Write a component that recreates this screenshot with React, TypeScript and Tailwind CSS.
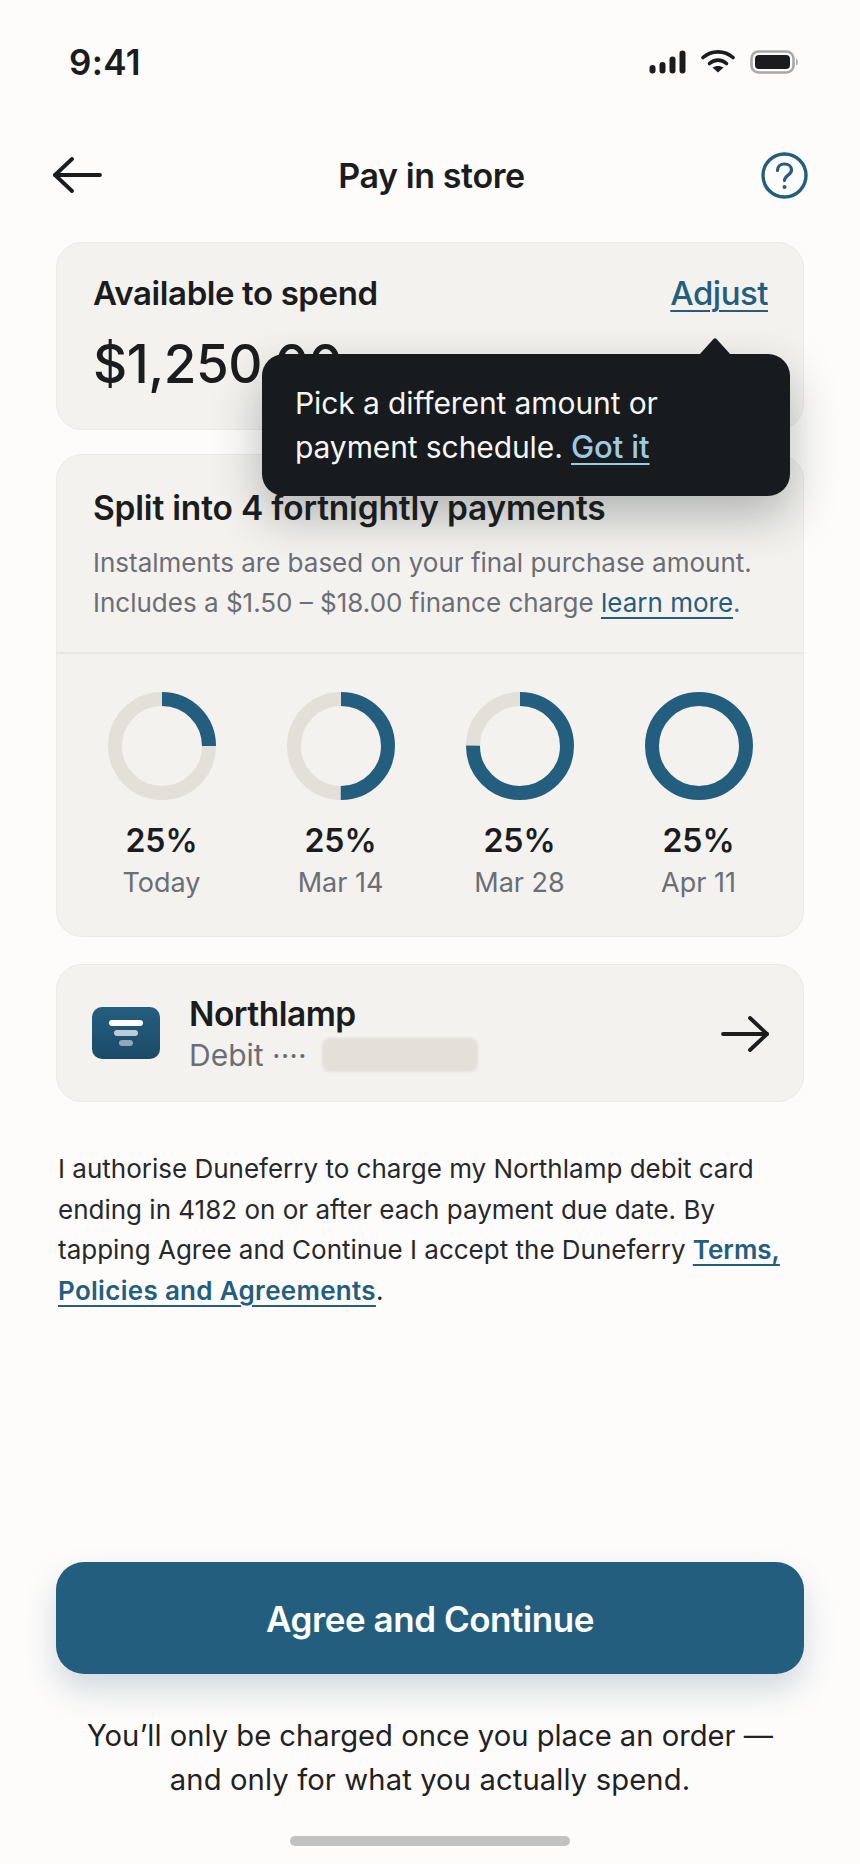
import React from "react";

function Donut({ pct }: { pct: number }) {
  const r = 47;
  const c = 2 * Math.PI * r;
  return (
    <svg width="108" height="108" viewBox="0 0 108 108">
      <circle cx="54" cy="54" r={r} fill="none" stroke="#e3e0d9" strokeWidth="14" />
      <circle
        cx="54"
        cy="54"
        r={r}
        fill="none"
        stroke="#245e7e"
        strokeWidth="14"
        strokeDasharray={`${c * pct} ${c}`}
        transform="rotate(-90 54 54)"
      />
    </svg>
  );
}

const steps = [
  { pct: 0.25, label: "Today" },
  { pct: 0.5, label: "Mar 14" },
  { pct: 0.75, label: "Mar 28" },
  { pct: 1, label: "Apr 11" },
];

export default function App() {
  return (
    <div className="w-[860px] h-[1864px] flex flex-col bg-[#fdfcfb] text-[#1a1c1e] font-['Inter',sans-serif] overflow-hidden">
      {/* status bar */}
      <div className="h-[124px] shrink-0 flex items-start justify-between pl-[69px] pr-[62px] pt-[42px]">
        <span className="text-[35px] leading-[40px] font-semibold tracking-[0.3px]">9:41</span>
        <div className="flex items-center gap-[15px] pt-[8px]">
          <svg width="37" height="24" viewBox="0 0 37 24" fill="#1a1c1e">
            <rect x="0.5" y="15" width="6" height="8.5" rx="3" />
            <rect x="10.5" y="12" width="6" height="11.5" rx="3" />
            <rect x="20.5" y="6.5" width="6" height="17" rx="3" />
            <rect x="30.5" y="0.5" width="6" height="23" rx="3" />
          </svg>
          <svg width="34" height="24" viewBox="0 0 34 24" fill="none" stroke="#1a1c1e" strokeWidth="3.6" strokeLinecap="round">
            <path d="M2 7.5C10.5 0 23.5 0 32 7.5" />
            <path d="M8.5 13.5C13.5 9 20.5 9 25.5 13.5" />
            <path d="M17 22.5L11.5 17.6C14.5 15.4 19.5 15.4 22.5 17.6Z" fill="#1a1c1e" stroke="none" />
          </svg>
          <svg width="48" height="24" viewBox="0 0 48 24" fill="none">
            <rect x="1.5" y="1.5" width="42" height="21" rx="7" stroke="#a8a8a8" strokeWidth="2.6" />
            <rect x="5" y="5" width="35" height="14" rx="4" fill="#1a1c1e" />
            <path d="M46 8.5C47.5 9 48 10.5 48 12C48 13.5 47.5 15 46 15.5Z" fill="#b5b5b5" />
          </svg>
        </div>
      </div>

      {/* header */}
      <div className="h-[102px] shrink-0 flex items-center justify-between pl-[52px] pr-[52px]">
        <svg width="50" height="36" viewBox="0 0 50 36" fill="none" stroke="#1a1c1e" strokeWidth="3.8" strokeLinecap="round" strokeLinejoin="round">
          <path d="M48 18H3" />
          <path d="M20 2L3 18L20 34" />
        </svg>
        <span className="pt-[1px] text-[34px] leading-[40px] font-semibold tracking-[-0.4px]">Pay in store</span>
        <svg width="47" height="47" viewBox="0 0 47 47" fill="none" stroke="#245e7e" strokeLinecap="round">
          <circle cx="23.5" cy="23.5" r="21.5" strokeWidth="3.4" />
          <path d="M16.5 18.5C16.5 14.5 19.5 12 23.5 12C27.5 12 30.5 14.5 30.5 18C30.5 23 23.5 23.5 23.5 28.5" strokeWidth="3.2" />
          <circle cx="23.5" cy="35" r="2" fill="#245e7e" stroke="none" />
        </svg>
      </div>

      <div className="mt-[16px] px-[56px] flex flex-col">
        {/* available card */}
        <div className="relative h-[188px] rounded-[26px] border border-[#ebeae6] bg-[#f3f2ef] pl-[36px] pr-[35px] pt-[30px]">
          <div className="flex items-start justify-between">
            <span className="text-[33px] leading-[40px] font-semibold tracking-[-0.4px]">Available to spend</span>
            <span className="text-[33px] leading-[40px] font-medium text-[#245e7e] underline underline-offset-[5px] decoration-[2px] tracking-[-0.5px]">Adjust</span>
          </div>
          <div className="mt-[21px] text-[53px] leading-[60px] font-medium tracking-[-0.5px]">$1,250.00</div>

          {/* tooltip */}
          <div className="absolute left-[205px] top-[111px] w-[528px] h-[142px] rounded-[22px] bg-[#171b1e] pl-[33px] pt-[27px] text-[30px] leading-[44px] tracking-[-0.1px] text-[#f6f6f4] shadow-[0_20px_48px_rgba(30,35,40,0.3)] z-10">
            <svg className="absolute left-[437px] top-[-16px]" width="32" height="17" viewBox="0 0 32 17" fill="#171b1e">
              <path d="M0 17L14.5 1Q16 -0.5 17.5 1L32 17Z" />
            </svg>
            <div>Pick a different amount or</div>
            <div>
              payment schedule.{" "}
              <span className="font-medium text-[31px] text-[#9ccae2] underline underline-offset-[5px] decoration-[2px]">Got it</span>
            </div>
          </div>
        </div>

        {/* split card */}
        <div className="mt-[24px] h-[483px] rounded-[26px] border border-[#ebeae6] bg-[#f3f2ef]">
          <div className="h-[199px] border-b-2 border-[#e8e7e3] pl-[36px] pr-[30px] pt-[33px]">
            <div className="text-[33.5px] leading-[40px] font-semibold tracking-[-0.2px]">Split into 4 fortnightly payments</div>
            <div className="mt-[15px] text-[26px] leading-[40px] text-[#6b6e74]">
              <div>Instalments are based on your final purchase amount.</div>
              <div>
                Includes a $1.50 – $18.00 finance charge{" "}
                <span className="text-[#245e7e] underline underline-offset-[5px] decoration-[2px]">learn more</span>.
              </div>
            </div>
          </div>
          <div className="grid grid-cols-4 px-[15px] pt-[38px]">
            {steps.map((s) => (
              <div key={s.label} className="flex flex-col items-center">
                <Donut pct={s.pct} />
                <div className="mt-[21px] text-[32px] leading-[40px] font-semibold">25%</div>
                <div className="mt-[2px] text-[27px] leading-[40px] text-[#6b6e74]">{s.label}</div>
              </div>
            ))}
          </div>
        </div>

        {/* bank card */}
        <div className="mt-[27px] h-[138px] rounded-[26px] border border-[#ebeae6] bg-[#f3f2ef] flex items-center pl-[35px] pr-[34px]">
          <div className="w-[68px] h-[52px] rounded-[10px] bg-gradient-to-b from-[#245e7e] to-[#1b4a68] flex flex-col items-center justify-center gap-[4px] shrink-0">
            <div className="w-[34px] h-[6px] rounded-full bg-white" />
            <div className="w-[24px] h-[6px] rounded-full bg-white/70" />
            <div className="w-[14px] h-[6px] rounded-full bg-white/50" />
          </div>
          <div className="ml-[29px] flex flex-col pt-[2px]">
            <span className="text-[33.5px] leading-[38px] font-semibold tracking-[-0.5px]">Northlamp</span>
            <div className="flex items-center h-[40px] pt-[3px]">
              <span className="text-[30px] leading-[40px] text-[#6b6e74]">Debit ····</span>
              <div className="ml-[15px] w-[156px] h-[34px] rounded-[8px] bg-[#e3e0d9] blur-[1px]" />
            </div>
          </div>
          <svg className="ml-auto mt-[1px]" width="48" height="36" viewBox="0 0 48 36" fill="none" stroke="#1a1c1e" strokeWidth="3.8" strokeLinecap="round" strokeLinejoin="round">
            <path d="M2 18H46" />
            <path d="M29 2L46 18L29 34" />
          </svg>
        </div>

        {/* legal */}
        <div className="mt-[47px] pl-[2px] text-[26px] leading-[40.7px] text-[#26282b]">
          <div>I authorise Duneferry to charge my Northlamp debit card</div>
          <div>ending in 4182 on or after each payment due date. By</div>
          <div>
            tapping Agree and Continue I accept the Duneferry{" "}
            <span className="font-semibold text-[#245e7e] underline underline-offset-[5px] decoration-[2px]">Terms,</span>
          </div>
          <div>
            <span className="font-semibold tracking-[0.3px] text-[#245e7e] underline underline-offset-[5px] decoration-[2px]">Policies and Agreements</span>.
          </div>
        </div>
      </div>

      {/* footer */}
      <div className="mt-auto px-[56px] flex flex-col items-center">
        <button className="w-full h-[112px] pt-[2px] rounded-[28px] bg-[#245e7e] text-white text-[35px] font-semibold tracking-[-0.45px] shadow-[0_16px_32px_rgba(36,80,105,0.2)]">
          Agree and Continue
        </button>
        <div className="mt-[40px] text-center text-[29.2px] leading-[44px] text-[#1f2123]">
          <div>You’ll only be charged once you place an order —</div>
          <div className="tracking-[0.12px]">and only for what you actually spend.</div>
        </div>
        <div className="mt-[34px] mb-[18px] w-[280px] h-[10px] rounded-full bg-[#c2c2c2]" />
      </div>
    </div>
  );
}
